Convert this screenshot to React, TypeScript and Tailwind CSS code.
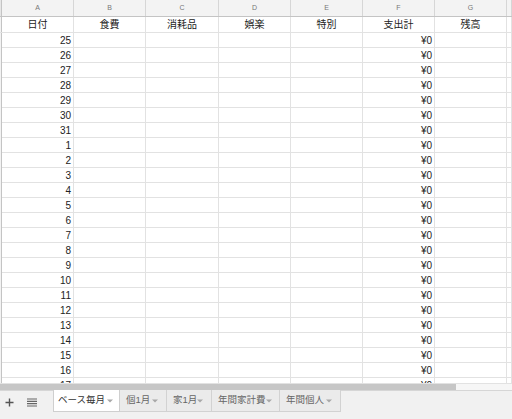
import React from 'react';

const letters = ['A', 'B', 'C', 'D', 'E', 'F', 'G', ''];
const titles = ['日付', '食費', '消耗品', '娯楽', '特別', '支出計', '残高', ''];
const days = [25, 26, 27, 28, 29, 30, 31, 1, 2, 3, 4, 5, 6, 7, 8, 9, 10, 11, 12, 13, 14, 15, 16, 17];
const tabs = [
  { name: '個1月', w: 'w-[47px]' },
  { name: '家1月', w: 'w-[45px]' },
  { name: '年間家計費', w: 'w-[68px]' },
  { name: '年間個人', w: 'w-[61px]' },
];

const cols = 'grid grid-cols-[2px_72px_72px_73px_72px_72px_72px_72px_1fr]';

function Caret() {
  return (
    <svg width="6" height="4" viewBox="0 0 6 4" className="ml-auto mt-[1px] shrink-0">
      <path d="M0 0.5h6L3 3.5z" fill="#a8a8a8" />
    </svg>
  );
}

export default function App() {
  return (
    <div
      className="w-[512px] h-[419px] overflow-hidden bg-white flex flex-col"
      style={{ fontFamily: '"Liberation Sans", Arial, "Noto Sans CJK JP", sans-serif' }}
    >
      <div className="h-[383px] overflow-hidden shrink-0">
        {/* column letters */}
        <div className={`${cols} h-[17px] bg-[#f3f3f3] border-b border-[#c4c4c4]`}>
          <div className="bg-[#e6e6e6] border-r border-[#c4c4c4]" />
          {letters.map((l, i) => (
            <div key={i} className="border-r border-[#d6d6d6] flex items-center justify-center text-[7px] text-[#777]">
              {l}
            </div>
          ))}
        </div>
        {/* title row */}
        <div className={`${cols} h-[16px] border-b border-[#e2e2e2]`}>
          <div className="bg-[#f3f3f3] border-r border-[#c4c4c4]" />
          {titles.map((t, i) => (
            <div key={i} className="border-r border-[#e2e2e2] flex items-center justify-center text-[10px] text-[#222]">
              {t}
            </div>
          ))}
        </div>
        {days.map((d, r) => (
          <div key={r} className={`${cols} h-[15px] border-b border-[#e2e2e2]`}>
            <div className="bg-[#f3f3f3] border-r border-[#c4c4c4]" />
            {letters.map((_, i) => (
              <div key={i} className="border-r border-[#e2e2e2] flex items-center justify-end pr-[2px] text-[10px] text-[#222]">
                {i === 0 ? d : i === 5 ? '¥0' : ''}
              </div>
            ))}
          </div>
        ))}
      </div>

      {/* horizontal scrollbar */}
      <div className="h-[7px] flex shrink-0 bg-[#f6f6f6] border-t border-[#e2e2e2]">
        <div className="w-[456px] bg-[#c6c6c6]" />
      </div>

      {/* sheet tabs */}
      <div className="flex-1 bg-[#f1f1f1] border-t border-[#d6d6d6] flex items-start">
        <div className="w-[53px] h-[22px] flex items-center shrink-0">
          <svg width="9" height="9" viewBox="0 0 9 9" className="ml-[5px]">
            <path d="M4.5 0.5v8M0.5 4.5h8" stroke="#555" strokeWidth="1.4" />
          </svg>
          <svg width="10" height="9" viewBox="0 0 10 9" className="ml-[13px]">
            <path d="M0 1h10M0 3.33h10M0 5.67h10M0 8h10" stroke="#666" strokeWidth="1.1" />
          </svg>
        </div>
        <div className="w-[67px] shrink-0 h-[22px] -mt-px bg-white border-x border-b border-[#cfcfcf] flex items-center pl-[4px] pr-[6px] whitespace-nowrap text-[9.5px] text-[#333]">
          ベース毎月
          <Caret />
        </div>
        {tabs.map((t) => (
          <div
            key={t.name}
            className={`${t.w} shrink-0 h-[22px] -mt-px bg-[#ebebeb] border-r border-b border-[#d2d2d2] flex items-center pl-[6px] pr-[8px] whitespace-nowrap text-[9.5px] text-[#666]`}
          >
            {t.name}
            <Caret />
          </div>
        ))}
      </div>
    </div>
  );
}
